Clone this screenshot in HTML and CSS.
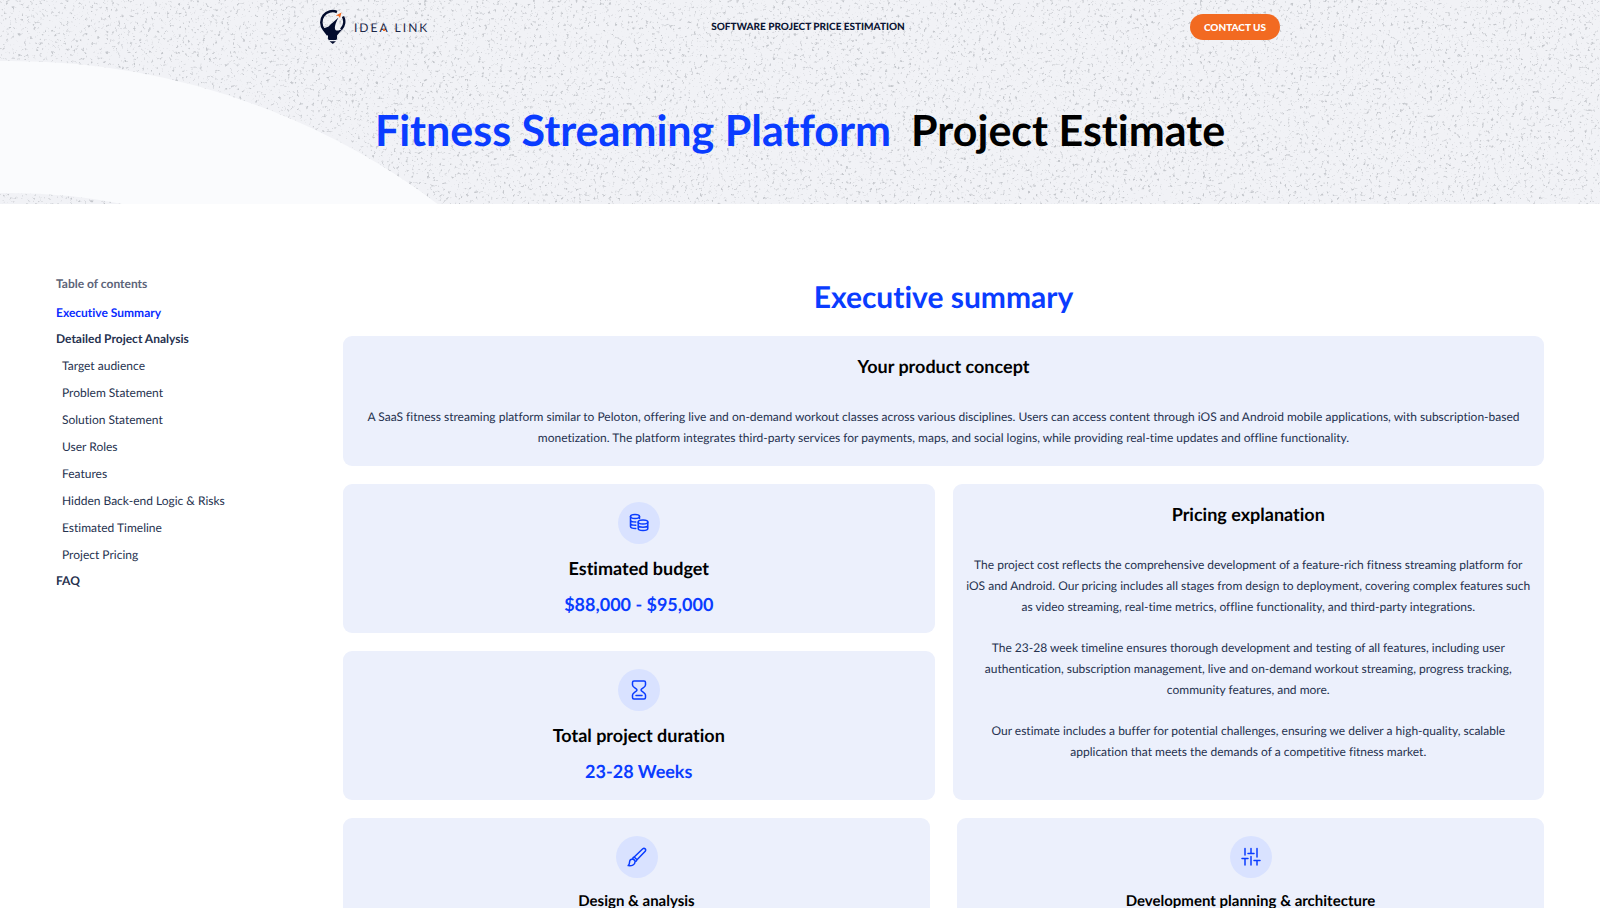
FILE: index.html
```html
<!DOCTYPE html>
<html lang="en">
<head>
<meta charset="utf-8">
<meta name="viewport" content="width=device-width, initial-scale=1">
<title>Fitness Streaming Platform Project Estimate</title>
<link rel="stylesheet" href="styles.css">
</head>
<body>
<header class="hero">
  <svg class="hero-art" aria-hidden="true">
    <defs>
      <filter id="speckle" x="0" y="0" width="100%" height="100%" color-interpolation-filters="sRGB">
        <feTurbulence type="fractalNoise" baseFrequency="0.33" numOctaves="3" seed="12"/>
        <feColorMatrix values="0 0 0 0 0.77  0 0 0 0 0.78  0 0 0 0 0.8  5 0 0 0 -3.05"/>
        <feGaussianBlur stdDeviation="0.7"/>
      </filter>
    </defs>
    <rect width="100%" height="100%" filter="url(#speckle)"/>
    <circle class="ring" cx="10" cy="771" r="644"/>
  </svg>
  <div class="topbar">
    <a class="logo" href="#">
      <svg width="27" height="36" viewBox="0 0 27 36" aria-hidden="true">
        <path d="M17 3A11.300 11.300 0 0 0 3.800 20.500L8 26M21 20.500A11.300 11.300 0 0 0 23 7.500" fill="none" stroke="#020b2d" stroke-width="2.500"/>
        <path d="M18.500 8.500L10 16C8.500 18.500 5.500 18.500 2.600 19.500L8 26.500V29.500Q8 31 9.500 31H15.500Q17 31 17 29.500V26.500L22.500 20C19.500 21.500 17 22 15.500 21C14 18.500 15.500 14 18.500 8.500Z" fill="#020b2d"/>
        <path d="M9.500 32.300H16L12.800 35Z" fill="#020b2d"/>
        <path d="M21.500 3.500L20 9L18.500 7L15.800 6.500Z" fill="#f26a21"/>
      </svg>
      <span class="logo-text">IDE<span class="logo-a">A</span> LINK</span>
    </a>
    <a class="tagline" href="#">SOFTWARE PROJECT PRICE ESTIMATION</a>
    <div class="topbar-end"><button class="contact" type="button">CONTACT US</button></div>
  </div>
  <h1 class="title"><span class="title-name">Fitness Streaming Platform</span> <span>Project Estimate</span></h1>
</header>

<div class="page">
  <nav class="toc" aria-labelledby="toc-title">
    <h2 class="toc-title" id="toc-title">Table of contents</h2>
    <ul class="toc-list">
      <li><a class="toc-link active" href="#summary">Executive Summary</a></li>
      <li><a class="toc-link" href="#analysis">Detailed Project Analysis</a>
        <ul class="toc-sub">
          <li><a href="#audience">Target audience</a></li>
          <li><a href="#problem">Problem Statement</a></li>
          <li><a href="#solution">Solution Statement</a></li>
          <li><a href="#roles">User Roles</a></li>
          <li><a href="#features">Features</a></li>
          <li><a href="#risks">Hidden Back-end Logic &amp; Risks</a></li>
          <li><a href="#timeline">Estimated Timeline</a></li>
          <li><a href="#pricing">Project Pricing</a></li>
        </ul>
      </li>
      <li><a class="toc-link" href="#faq">FAQ</a></li>
    </ul>
  </nav>

  <main class="content" id="summary">
    <h2 class="section-title">Executive summary</h2>

    <section class="card text-card concept">
      <h3 class="card-title">Your product concept</h3>
      <p>A SaaS fitness streaming platform similar to Peloton, offering live and on-demand workout classes across various disciplines. Users can access content through iOS and Android mobile applications, with subscription-based monetization. The platform integrates third-party services for payments, maps, and social logins, while providing real-time updates and offline functionality.</p>
    </section>

    <div class="overview">
      <section class="card stat">
        <span class="badge"><svg class="icon" viewBox="0 0 20 20" aria-hidden="true"><ellipse cx="6" cy="3.500" rx="4.500" ry="2"/><path d="M1.500 3.500V13.500C1.500 14.800 3.500 15.500 6.800 15.500M1.500 7C1.500 8.200 3.500 9 6.800 9M1.500 10.300C1.500 11.500 3.500 12.300 6.800 12.300M10.500 3.500V5.500"/><ellipse cx="14" cy="9" rx="4.800" ry="2"/><path d="M9.200 9V15.500C9.200 16.700 11.200 17.500 14 17.500S18.800 16.700 18.800 15.500V9M9.200 12.300C9.200 13.500 11.200 14.200 14 14.200S18.800 13.500 18.800 12.300"/></svg></span>
        <h3 class="card-title">Estimated budget</h3>
        <p class="value">$88,000 - $95,000</p>
      </section>
      <section class="card stat">
        <span class="badge"><svg class="icon" viewBox="0 0 20 20" aria-hidden="true"><path d="M5 1H15Q16.500 1 16.500 2.500V5C16.500 7.500 12 8.500 12 10S16.500 12.500 16.500 15V17.500Q16.500 19 15 19H5Q3.500 19 3.500 17.500V15C3.500 12.500 8 11.500 8 10S3.500 7.500 3.500 5V2.500Q3.500 1 5 1ZM7 15.500H13"/></svg></span>
        <h3 class="card-title">Total project duration</h3>
        <p class="value">23-28 Weeks</p>
      </section>
      <section class="card text-card explanation">
        <h3 class="card-title">Pricing explanation</h3>
        <p>The project cost reflects the comprehensive development of a feature-rich fitness streaming platform for iOS and Android. Our pricing includes all stages from design to deployment, covering complex features such as video streaming, real-time metrics, offline functionality, and third-party integrations.</p>
        <p>The 23-28 week timeline ensures thorough development and testing of all features, including user authentication, subscription management, live and on-demand workout streaming, progress tracking, community features, and more.</p>
        <p>Our estimate includes a buffer for potential challenges, ensuring we deliver a high-quality, scalable application that meets the demands of a competitive fitness market.</p>
      </section>
    </div>

    <div class="phases">
      <section class="card stat">
        <span class="badge"><svg class="icon" viewBox="0 0 20 20" aria-hidden="true"><path d="M7.200 10L15.800 1.800C17.500 0.500 19.500 2.500 18.200 4.200L10 12.800ZM7.200 10L10 12.800M7.200 10C6 10.500 5.500 11 6 12M10 12.800C9.500 14 9 14.500 8 14M6 12C3.500 12 2.500 14 2.500 15.500C2.500 17 1.800 18 1.200 18.600C4 19 8.500 18.500 8 14C7.500 13 7 12.500 6 12Z"/></svg></span>
        <h3 class="card-title phase-title">Design &amp; analysis</h3>
      </section>
      <section class="card stat">
        <span class="badge"><svg class="icon" viewBox="0 0 20 20" aria-hidden="true"><path d="M4 1.500V8M10 1.500V6M7 6.500H13M16 1.500V10M1 11.500H7M4 11.500V18M10 9.500V18M13 13.500H19M16 13.500V18"/></svg></span>
        <h3 class="card-title phase-title">Development planning &amp; architecture</h3>
      </section>
    </div>
  </main>
</div>
</body>
</html>
```
FILE: styles.css
```css
* { box-sizing: border-box; }

html { scrollbar-width: none; }

body {
  margin: 0;
  background: #fff;
  color: #0b1533;
  font-family: Lato, "Liberation Sans", sans-serif;
  font-size: 12px;
  font-variant-ligatures: none;
  text-rendering: geometricPrecision;
}

h1, h2, h3, p, ul { margin: 0; }
ul { padding: 0; list-style: none; }
a { color: inherit; text-decoration: none; }

.hero {
  position: relative;
  padding-bottom: 45px;
  background: #f1f2f6;
  overflow: hidden;
}

.hero-art {
  position: absolute;
  inset: 0;
  width: 100%;
  height: 100%;
}

.ring { fill: none; stroke: #fafbfd; stroke-width: 132px; }

.topbar {
  position: relative;
  display: grid;
  grid-template-columns: 1fr auto 1fr;
  align-items: center;
  width: 60%;
  height: 54px;
  margin: 0 auto;
}

.logo { display: flex; align-items: center; gap: 7px; }

.logo-text {
  font-size: 12px;
  letter-spacing: 2px;
  color: #1c2747;
}

.logo-a { position: relative; }

.logo-a::after {
  content: "";
  position: absolute;
  left: 4px;
  bottom: 4px;
  width: 2px;
  height: 2px;
  background: #f26a21;
}

.tagline {
  padding-left: 16px;
  font-size: 10px;
  font-weight: 900;
  line-height: 14px;
}

.topbar-end { text-align: right; }

.contact {
  height: 26px;
  padding: 0 14px;
  border: 0;
  border-radius: 13px;
  background: #f26a21;
  color: #fff;
  font-family: inherit;
  font-size: 10px;
  font-weight: 900;
}

.title {
  position: relative;
  display: flex;
  justify-content: center;
  gap: 20px;
  padding-top: 49px;
  color: #000;
  font-size: 43px;
  font-weight: 700;
  line-height: 56px;
}

.title-name, .section-title, .value { color: #0a3cff; }

.page {
  display: grid;
  grid-template-columns: 287px 1fr;
  padding: 70px 56px 0;
}

.toc { color: #26324f; }

.toc-title {
  padding-bottom: 6px;
  color: #5d6579;
  font-size: 12px;
  font-weight: 700;
  line-height: 20px;
}

.toc-link { display: block; font-weight: 700; line-height: 26px; }
.active { color: #0a2cff; }
.toc-sub { padding-left: 6px; line-height: 27px; }

.section-title {
  padding-bottom: 16px;
  font-size: 30px;
  font-weight: 700;
  line-height: 46px;
  text-align: center;
}

.card {
  border-radius: 9px;
  background: #ecf0fc;
  text-align: center;
}

.card-title {
  color: #000;
  font-size: 18px;
  font-weight: 700;
  line-height: 26px;
}

.text-card {
  display: flex;
  flex-direction: column;
  gap: 20px;
  padding: 17px 12px 18px;
  color: #26324f;
  line-height: 21px;
}

.text-card .card-title { padding-bottom: 7px; }

.overview {
  display: grid;
  grid-template-columns: 1fr 1fr;
  gap: 18px;
  margin: 18px 0;
}

.explanation { grid-column: 2; grid-row: 1 / span 2; }

.stat { padding: 18px 18px 16px; }

.badge {
  display: grid;
  place-items: center;
  width: 42px;
  height: 42px;
  margin: 0 auto 11px;
  border-radius: 50%;
  background: #d9e2ff;
}

.icon {
  width: 20px;
  height: 20px;
  fill: none;
  stroke: #0a3cff;
  stroke-width: 1.5;
  stroke-linecap: round;
  stroke-linejoin: round;
}

.value {
  padding-top: 10px;
  font-size: 18px;
  font-weight: 700;
  line-height: 26px;
}

.phases {
  display: grid;
  grid-template-columns: 1fr 1fr;
  gap: 27px;
}

.phase-title { font-size: 15px; line-height: 24px; }
```
